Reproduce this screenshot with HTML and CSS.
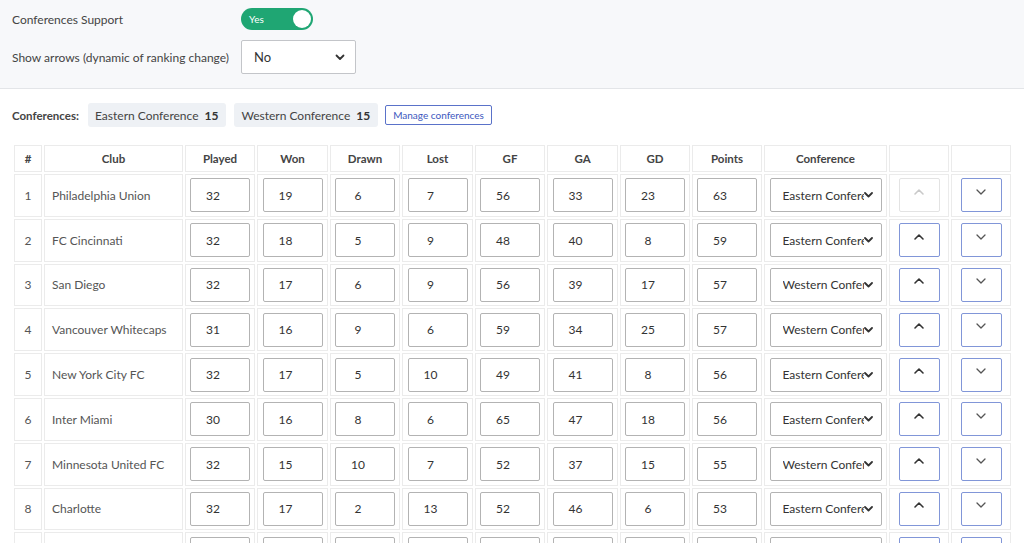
FILE: index.html
```html
<!DOCTYPE html>
<html lang="en">
<head>
<meta charset="utf-8">
<title>Standings</title>
<link rel="stylesheet" href="styles.css">
</head>
<body>
<div class="settings">
  <div class="set-row">
    <div class="set-label">Conferences Support</div>
    <div class="toggle"><span>Yes</span><i class="knob"></i></div>
  </div>
  <div class="set-row">
    <div class="set-label">Show arrows (dynamic of ranking change)</div>
    <div class="select"><span>No</span><svg width="10" height="7" viewBox="0 0 10 7"><polyline points="1.5,1.5 5,5 8.5,1.5" fill="none" stroke="#333" stroke-width="1.8" stroke-linecap="round" stroke-linejoin="round"/></svg></div>
  </div>
</div>

<div class="confbar">
  <span class="conf-label">Conferences:</span>
  <span class="chip">Eastern Conference <b>15</b></span>
  <span class="chip">Western Conference <b>15</b></span>
  <button class="manage">Manage conferences</button>
</div>

<table class="standings">
  <colgroup>
    <col class="c-pos"><col class="c-club"><col class="c70"><col class="c71"><col class="c70"><col class="c71"><col class="c70"><col class="c71"><col class="c70"><col class="c70"><col class="c-conf"><col class="c-btn"><col class="c-btn">
  </colgroup>
  <thead>
    <tr><th>#</th><th>Club</th><th>Played</th><th>Won</th><th>Drawn</th><th>Lost</th><th>GF</th><th>GA</th><th>GD</th><th>Points</th><th>Conference</th><th></th><th></th></tr>
  </thead>
  <tbody id="rows"></tbody>
</table>
<script src="script.js"></script>
</body>
</html>
```
FILE: script.js
```js
var data = [
  [1, "Philadelphia Union", 32, 19, 6, 7, 56, 33, 23, 63, "Eastern Conference"],
  [2, "FC Cincinnati", 32, 18, 5, 9, 48, 40, 8, 59, "Eastern Conference"],
  [3, "San Diego", 32, 17, 6, 9, 56, 39, 17, 57, "Western Conference"],
  [4, "Vancouver Whitecaps", 31, 16, 9, 6, 59, 34, 25, 57, "Western Conference"],
  [5, "New York City FC", 32, 17, 5, 10, 49, 41, 8, 56, "Eastern Conference"],
  [6, "Inter Miami", 30, 16, 8, 6, 65, 47, 18, 56, "Eastern Conference"],
  [7, "Minnesota United FC", 32, 15, 10, 7, 52, 37, 15, 55, "Western Conference"],
  [8, "Charlotte", 32, 17, 2, 13, 52, 46, 6, 53, "Eastern Conference"],
  [9, "Seattle Sounders FC", 32, 14, 9, 9, 55, 44, 11, 51, "Western Conference"]
];
var up = '<svg width="12" height="8" viewBox="0 0 12 8"><polyline points="2,6 6,2 10,6" fill="none" stroke="currentColor" stroke-width="1.6" stroke-linecap="round" stroke-linejoin="round"/></svg>';
var down = '<svg width="12" height="8" viewBox="0 0 12 8"><polyline points="2,2 6,6 10,2" fill="none" stroke="currentColor" stroke-width="1.3" stroke-linecap="round" stroke-linejoin="round"/></svg>';
var chev = '<svg width="9" height="6" viewBox="0 0 9 6"><polyline points="1,1 4.5,4.5 8,1" fill="none" stroke="#333" stroke-width="1.8" stroke-linecap="round" stroke-linejoin="round"/></svg>';
var html = "";
data.forEach(function (r, i) {
  html += "<tr><td class='pos'>" + r[0] + "</td><td class='club'>" + r[1] + "</td>";
  for (var k = 2; k <= 9; k++) {
    html += "<td><input class='num' type='text' value='" + r[k] + "'></td>";
  }
  html += "<td><div class='conf-select'><span class='conf-text'>" + r[10] + "</span>" + chev + "</div></td>";
  html += "<td><button class='arrow up" + (i === 0 ? " disabled" : "") + "'>" + up + "</button></td>";
  html += "<td><button class='arrow down'>" + down + "</button></td></tr>";
});
document.getElementById("rows").innerHTML = html;
```
FILE: styles.css
```css
* { box-sizing: border-box; }
body {
  margin: 0;
  font-family: Lato, "Liberation Sans", sans-serif;
  color: #444;
  background: #fff;
}
.settings {
  background: #f7f8fa;
  border-bottom: 1px solid #e3e5e8;
  padding: 8px 12px 14px;
  display: flex;
  flex-direction: column;
  gap: 10px;
}
.set-row { display: flex; align-items: center; }
.set-label { width: 229px; font-size: 12px; color: #444; }
.toggle {
  position: relative;
  width: 72px;
  height: 22px;
  border-radius: 11px;
  background: #1fa673;
  color: #fff;
  font-size: 10px;
  display: flex;
  align-items: center;
  padding-left: 8px;
}
.knob {
  position: absolute;
  right: 2px;
  top: 2px;
  width: 18px;
  height: 18px;
  border-radius: 50%;
  background: #fff;
}
.select {
  width: 115px;
  height: 34px;
  background: #fff;
  border: 1px solid #c3c5c9;
  border-radius: 2px;
  display: flex;
  align-items: center;
  justify-content: space-between;
  padding: 0 10px 0 12px;
  font-size: 13px;
  color: #333;
}
.confbar {
  display: flex;
  align-items: center;
  gap: 7px;
  padding: 14px 12px 0;
}
.conf-label { font-size: 11.5px; font-weight: 700; color: #444; width: 69px; }
.chip {
  height: 24px;
  display: flex;
  align-items: center;
  gap: 6px;
  padding: 0 8px 0 7px;
  background: #eef1f5;
  border-radius: 3px;
  font-size: 12px;
  color: #444;
}
.chip + .chip { margin-left: 1px; }
.chip b { font-weight: 700; color: #333; }
.manage {
  height: 20px;
  padding: 0 7px;
  background: #fff;
  border: 1px solid #5a72c9;
  border-radius: 2px;
  color: #3c58be;
  font-family: inherit;
  font-size: 10px;
}
.standings {
  border-collapse: separate;
  border-spacing: 2px;
  table-layout: fixed;
  width: 1001px;
  margin: 16px 0 0 12px;
}
.c-pos { width: 28px; }
.c-club { width: 139px; }
.c70 { width: 70px; }
.c71 { width: 71px; }
.c-conf { width: 123px; }
.c-btn { width: 60px; }
.standings th, .standings td { border: 1px solid #ebebeb; }
.standings th {
  height: 27px;
  padding: 0 0 1px;
  font-size: 11.5px;
  font-weight: 700;
  color: #444;
  text-align: center;
}
.standings td { height: 42.8px; padding: 0; font-size: 12px; color: #555; }
.pos { text-align: center; font-size: 11.5px; }
.club { padding-left: 7px !important; white-space: nowrap; overflow: hidden; }
.num {
  display: block;
  margin: 0 auto;
  width: 60px;
  height: 34px;
  border: 1px solid #b3b3b3;
  border-radius: 2px;
  padding: 0 14px 0 0;
  text-align: center;
  font-family: inherit;
  font-size: 12px;
  color: #333;
  background: #fff;
}
.conf-select {
  margin: 0 auto;
  width: 112px;
  height: 34px;
  border: 1px solid #b3b3b3;
  border-radius: 2px;
  display: flex;
  align-items: center;
  padding-left: 12px;
  font-size: 12px;
  color: #333;
  background: #fff;
}
.conf-text { width: 81px; white-space: nowrap; overflow: hidden; }
.arrow {
  display: flex;
  align-items: center;
  justify-content: center;
  margin: 0 auto;
  width: 41px;
  height: 34px;
  padding: 0 0 7px;
  background: #fff;
  border: 1px solid #8196d8;
  border-radius: 2px;
}
.arrow.up { color: #333; }
.arrow.down { color: #555; }
.arrow.disabled { border-color: #e3e3e3; color: #c9c9c9; }
```
